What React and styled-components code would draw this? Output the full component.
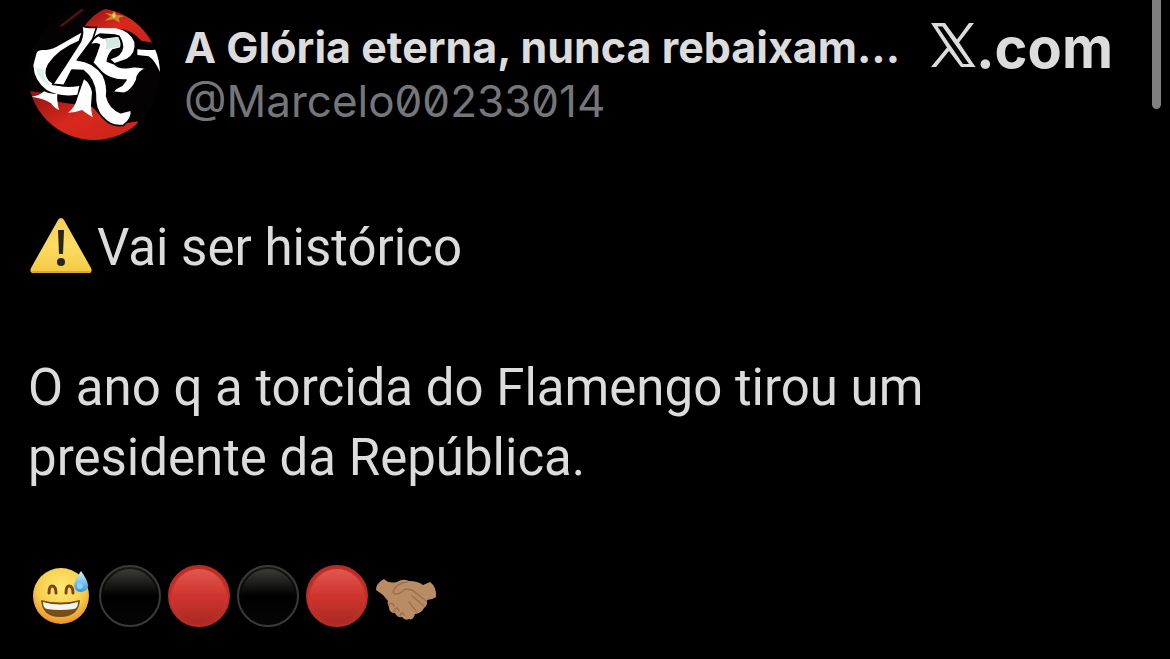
import React from 'react';
import styled, { createGlobalStyle } from 'styled-components';

const GlobalStyle = createGlobalStyle`
  * {
    box-sizing: border-box;
  }

  body {
    margin: 0;
    background: #000;
    color: #dcdcdc;
    font-family: Roboto, 'Liberation Sans', sans-serif;
  }
`;

const Post = styled.article`
  padding: 8px 28px 24px;
`;

const Header = styled.header`
  display: flex;
  align-items: flex-start;
  padding-right: 29px;
`;

const Author = styled.div`
  flex: 1;
  min-width: 0;
  padding: 12px 0 0 24px;
`;

const Name = styled.h1`
  margin: 0;
  font-family: Inter, sans-serif;
  font-size: 43px;
  line-height: 54px;
  font-weight: 700;
  white-space: nowrap;
`;

const Handle = styled.p`
  margin: 0;
  color: #75767a;
  font-family: Inter, sans-serif;
  font-size: 44px;
  line-height: 54px;
  font-feature-settings: 'zero';
`;

const Brand = styled.div`
  display: flex;
  align-items: baseline;
  padding-top: 5px;
  font-family: Inter, 'Liberation Sans', sans-serif;
  font-size: 56px;
  line-height: 70px;
  font-weight: 700;
`;

const Body = styled.div`
  padding-top: 73px;
`;

const Line = styled.p`
  display: flex;
  align-items: center;
  gap: ${({ $gap }) => $gap || 0}px;
  margin: 0 0 70px;
  padding-left: ${({ $inset }) => $inset || 0}px;
  min-height: 70px;
  font-size: 51px;
  line-height: 70px;

  &:last-child {
    margin-bottom: 0;
  }
`;

const Emoji = styled.svg`
  width: 62px;
  height: 62px;
  margin-bottom: 4px;
  flex: none;
`;

const ScrollThumb = styled.div`
  position: absolute;
  top: 0;
  right: 9px;
  width: 9px;
  height: 109px;
  border-radius: 0 0 5px 5px;
  background: #7f7f7f;
`;

const Avatar = () => (
  <svg width="132" height="132" viewBox="24 24 396 396" role="img" aria-label="Avatar">
    <defs>
      <clipPath id="round">
        <circle cx="222" cy="222" r="198" />
      </clipPath>
      <linearGradient id="flag" x1="0" y1="0" x2="1" y2="1">
        <stop offset="0" stopColor="#8e1410" />
        <stop offset="0.5" stopColor="#d8281c" />
        <stop offset="1" stopColor="#c9231a" />
      </linearGradient>
    </defs>
    <g clipPath="url(#round)">
      <rect x="24" y="24" width="396" height="396" fill="#040203" />
      <path d="M186 92 Q214 40 262 24 L330 24 L400 128 L364 122 Q330 84 288 86Z" fill="url(#flag)" />
      <path d="M118 78 L184 26 L192 30 L126 80Z" fill="#5a0e18" />
      <path d="M24 272 L80 280 L116 306 L216 320 L246 352 L300 372 L354 364 L330 420 L60 420Z" fill="url(#flag)" />
      <path d="M283 32 L289 44 L313 48 L296 54 L300 68 L281 58 L254 62 L272 49 L254 38 L276 42Z" fill="#c98a2a" />
      <path d="M283 38 L287 48 L281 56 L276 46Z" fill="#f0d070" />
      <g fill="#fff">
        <path d="M50 158 Q54 150 68 150 Q92 150 110 140 L184 98 L176 122 Q112 148 84 192 Q68 220 86 242 Q112 268 178 258 L172 284 Q118 292 80 270 Q42 242 40 196Z" />
        <path d="M34 290 Q58 288 72 274 Q92 284 112 282 Q110 302 117 331 Q102 324 92 309 Q68 294 34 290Z" />
        <path d="M192 238 Q210 250 216 276 L213 316 Q213 334 218 352 Q202 342 186 330 Q166 338 144 338 Q166 322 172 294Z" />
        <path d="M352 148 Q380 152 406 149 L420 162 L420 216 Q404 180 386 169 L352 165Z" />
        <path d="M222 84 L288 85 Q328 92 343 126 Q348 160 320 176 L284 189 L272 178 Q308 168 310 140 Q306 106 286 103 L240 100 Q214 110 206 138 L208 110Z" />
      </g>
      <g fill="#fff" stroke="#080406" strokeWidth="5" strokeLinejoin="round">
        <path d="M210 138 Q214 118 236 106 Q242 112 250 114 L296 108 Q308 130 302 144 L278 150 Q264 166 262 184 L284 192 Q296 206 326 202 Q350 196 382 206 Q352 214 350 240 Q334 274 312 280 L278 276 Q290 262 306 256 L318 240 Q276 244 246 218 L218 188 Q230 160 238 134 Q222 128 210 138Z" />
        <path d="M184 77 Q200 84 230 82 L218 118 L172 180 Q220 184 250 226 Q264 256 260 288 Q268 324 302 338 L334 330 Q338 356 310 376 Q274 382 248 352 Q224 330 226 282 Q224 238 190 212 L156 210 L132 256 L98 253 Q112 232 132 202 L182 124 Q192 96 184 77Z" />
      </g>
      <path d="M254 118 L294 112 Q302 128 298 140 L256 148 Q264 132 254 118Z" fill="#d3eae1" />
      <path d="M48 204 Q54 240 92 258 L82 244 Q68 230 72 208Z" fill="#dcf1e7" />
    </g>
  </svg>
);

const XLogo = () => (
  <svg width="46" height="46" viewBox="0 0 46 46" role="img" aria-label="X">
    <path
      fill="#dcdcdc"
      fillRule="evenodd"
      d="M1 1H15L27 17.5 39 1H44L29 20.5 45.5 45H31L19 29 6 45H1L17 25.5ZM7.5 4.5L33 42H39L12.5 4.5Z"
    />
  </svg>
);

const Warning = () => (
  <Emoji viewBox="0 0 62 62" role="img" aria-label="Atenção">
    <defs>
      <linearGradient id="sign" x1="0" y1="0" x2="0" y2="1">
        <stop offset="0" stopColor="#f6cf50" />
        <stop offset="0.5" stopColor="#fbdc62" />
        <stop offset="1" stopColor="#f5c944" />
      </linearGradient>
    </defs>
    <path d="M28 5 Q31 1 34 5 L61 53 Q63 58 58 58 H4 Q-1 58 1 53Z" fill="url(#sign)" />
    <path d="M1 56 Q2 58 5 58 H57 Q60 58 61 56Z" fill="#d9a62f" />
    <path d="M28 15 H34 L33 39 H29Z" fill="#282418" />
    <circle cx="31" cy="47" r="4" fill="#282418" />
  </Emoji>
);

const Grin = () => (
  <Emoji viewBox="0 0 62 62" role="img" aria-label="Sorriso com suor">
    <defs>
      <radialGradient id="skin" cx="0.5" cy="0.35" r="0.65">
        <stop offset="0" stopColor="#fdea70" />
        <stop offset="0.65" stopColor="#f9cd4c" />
        <stop offset="1" stopColor="#e88f31" />
      </radialGradient>
      <linearGradient id="drop" x1="0" y1="0" x2="0" y2="1">
        <stop offset="0" stopColor="#d6f3fb" />
        <stop offset="1" stopColor="#2e98df" />
      </linearGradient>
    </defs>
    <circle cx="31" cy="31" r="28" fill="url(#skin)" />
    <path d="M19 28 Q19 21 22 21 Q26 21 26 28 M36 28 Q36 21 39 21 Q43 21 43 28" fill="none" stroke="#774415" strokeWidth="3" strokeLinecap="round" />
    <path d="M11 35 Q30 40 50 35 Q49 52 30 52 Q12 52 11 35Z" fill="#784d16" />
    <path d="M13 37 Q30 42 48 37 Q48 43 44 44 Q30 46 17 44 Q13 43 13 37Z" fill="#f6f5ef" />
    <path d="M51 6 Q44 16 44 21 Q45 27 51 27 Q58 26 58 20 Q57 14 51 6Z" fill="url(#drop)" />
    <circle cx="50" cy="21" r="3" fill="#8ad3f3" />
  </Emoji>
);

const discColors = {
  black: { edge: '#3a3b39', rim: '#161716', top: '#3b3b38', mid: '#000', bottom: '#050505', label: 'Preto' },
  red: { edge: '#b92d28', rim: '#c02a26', top: '#e0584f', mid: '#cf342d', bottom: '#ab2a24', label: 'Vermelho' }
};

const Disc = ({ color }) => {
  const { edge, rim, top, mid, bottom, label } = discColors[color];
  return (
    <Emoji viewBox="0 0 62 62" role="img" aria-label={label}>
      <defs>
        <linearGradient id={`disc-${color}`} x1="0" y1="0" x2="0" y2="1">
          <stop offset="0" stopColor={top} />
          <stop offset="0.5" stopColor={mid} />
          <stop offset="1" stopColor={bottom} />
        </linearGradient>
        <linearGradient id={`rim-${color}`} x1="0" y1="0" x2="0" y2="1">
          <stop offset="0" stopColor={rim} />
          <stop offset="0.6" stopColor={mid} />
          <stop offset="1" stopColor={bottom} />
        </linearGradient>
      </defs>
      <circle cx="31" cy="31" r="30" fill={`url(#rim-${color})`} stroke={edge} strokeWidth="2" />
      <circle cx="31" cy="31" r="27" fill={`url(#disc-${color})`} />
    </Emoji>
  );
};

const Handshake = () => (
  <Emoji viewBox="0 0 62 62" role="img" aria-label="Aperto de mãos">
    <path
      d="M9 14 Q14 19 22 17 Q28 13 34 16 Q43 16 48 20 L55 17 Q62 22 61 32 Q57 35 52 35 Q53 40 49 43 Q47 48 40 49 Q38 56 34 54 Q30 56 27 52 Q22 53 20 48 Q14 48 14 42 Q12 38 13 36 L8 30 L1 25 Q1 18 9 14Z"
      fill="#b98c63"
    />
    <path
      d="M32 17 Q25 18 22 21 Q15 28 20 29 Q26 29 30 24 L37 25 L51 36 M37 31 L49 41 M34 37 L41 46 M14 40 Q17 36 19 41 M19 46 Q22 40 24 46 M25 51 Q27 45 29 50"
      fill="none"
      stroke="#9d7150"
      strokeWidth="1.5"
      strokeLinecap="round"
    />
  </Emoji>
);

const App = () => (
  <>
    <GlobalStyle />
    <Post>
      <Header>
        <Avatar />
        <Author>
          <Name>A Glória eterna, nunca rebaixam...</Name>
          <Handle>@Marcelo00233014</Handle>
        </Author>
        <Brand>
          <XLogo />
          <span>.com</span>
        </Brand>
      </Header>
      <Body>
        <Line $inset={2} $gap={5}>
          <Warning />
          <span>Vai ser histórico</span>
        </Line>
        <Line>
          O ano q a torcida do Flamengo tirou um
          <br />
          presidente da República.
        </Line>
        <Line $inset={2} $gap={7}>
          <Grin />
          <Disc color="black" />
          <Disc color="red" />
          <Disc color="black" />
          <Disc color="red" />
          <Handshake />
        </Line>
      </Body>
    </Post>
    <ScrollThumb />
  </>
);

export default App;
